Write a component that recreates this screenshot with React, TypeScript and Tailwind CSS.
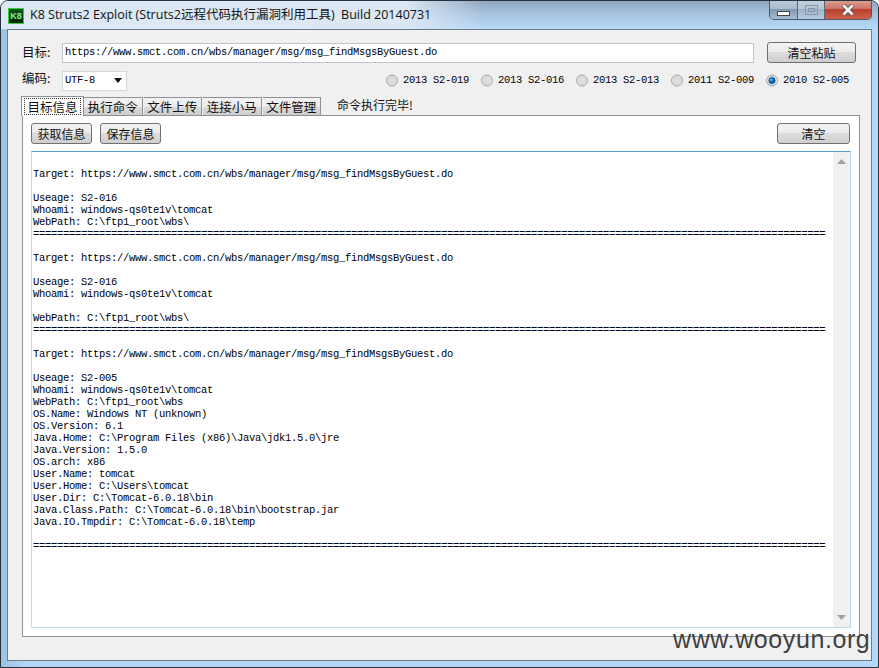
import React from 'react'

const CJK = "font-['Noto_Sans_CJK_SC',sans-serif]"
const MONO = "font-['Liberation_Mono','Noto_Sans_CJK_SC',monospace]"

const rule = '='.repeat(132)
const url = 'https://www.smct.com.cn/wbs/manager/msg/msg_findMsgsByGuest.do'

const output = [
  '',
  `Target: ${url}`,
  '',
  'Useage: S2-016',
  'Whoami: windows-qs0te1v\\tomcat',
  'WebPath: C:\\ftp1_root\\wbs\\',
  rule,
  '',
  `Target: ${url}`,
  '',
  'Useage: S2-016',
  'Whoami: windows-qs0te1v\\tomcat',
  '',
  'WebPath: C:\\ftp1_root\\wbs\\',
  rule,
  '',
  `Target: ${url}`,
  '',
  'Useage: S2-005',
  'Whoami: windows-qs0te1v\\tomcat',
  'WebPath: C:\\ftp1_root\\wbs',
  'OS.Name: Windows NT (unknown)',
  'OS.Version: 6.1',
  'Java.Home: C:\\Program Files (x86)\\Java\\jdk1.5.0\\jre',
  'Java.Version: 1.5.0',
  'OS.arch: x86',
  'User.Name: tomcat',
  'User.Home: C:\\Users\\tomcat',
  'User.Dir: C:\\Tomcat-6.0.18\\bin',
  'Java.Class.Path: C:\\Tomcat-6.0.18\\bin\\bootstrap.jar',
  'Java.IO.Tmpdir: C:\\Tomcat-6.0.18\\temp',
  '',
  rule,
]

const exploits = [
  { label: '2013 S2-019', checked: false },
  { label: '2013 S2-016', checked: false },
  { label: '2013 S2-013', checked: false },
  { label: '2011 S2-009', checked: false },
  { label: '2010 S2-005', checked: true },
]

const tabs = ['执行命令', '文件上传', '连接小马', '文件管理']

function Btn({ label, className }: { label: string; className: string }) {
  return (
    <button
      className={`h-[21px] rounded-[3px] border border-[#707070] bg-[linear-gradient(#f2f2f2_0%,#ebebeb_50%,#dddddd_50%,#cfcfcf_100%)] text-[12px] leading-none text-[#111] ${CJK} ${className}`}
    >
      {label}
    </button>
  )
}

function Radio({ checked }: { checked: boolean }) {
  return (
    <svg width="13" height="13" viewBox="0 0 13 13">
      <circle cx="6.5" cy="6.5" r="6" fill="#ececec" stroke="#9a9b9b" />
      <circle cx="6.5" cy="6.5" r="4.3" fill={checked ? '#0f5f9e' : '#dedede'} stroke={checked ? '#d0dbe6' : '#cfcfcf'} />
      {checked && <circle cx="5.8" cy="5.6" r="1.4" fill="#6fc0ee" />}
    </svg>
  )
}

export default function App() {
  return (
    <div className="relative flex h-[668px] w-[879px] flex-col overflow-hidden rounded-t-lg border border-[#26323d] bg-[linear-gradient(90deg,#9cc2e4_0%,#b5d8f8_3%,#b5d8f8_100%)] px-[6px] pb-[6px]">
      {/* title bar */}
      <div className="-mx-[6px] flex h-[28px] shrink-0 items-start bg-[linear-gradient(90deg,#dce8f3_0%,#dbe7f3_46%,#dbe7f300_55%),linear-gradient(#8fa6bd_0%,#a6c2de_45%,#b6dafa_100%)] pl-[7px] pr-[6px]">
        <div className="mt-[7px] flex h-[16px] w-[16px] items-center justify-center border border-[#2fd02f] bg-[linear-gradient(#0c5a1c,#032208)] font-['Liberation_Sans',sans-serif] text-[9px] font-bold leading-none text-[#8af08a]">
          K8
        </div>
        <span className="ml-[6px] mt-[5px] whitespace-nowrap font-['Open_Sans','Noto_Sans_CJK_SC',sans-serif] text-[12.5px] leading-[18px] text-[#111]">
          K8 Struts2 Exploit (Struts2远程代码执行漏洞利用工具)&nbsp; Build 20140731
        </span>
        <div className="-mt-px ml-auto flex h-[20px] w-[103px] overflow-hidden rounded-b-[5px] border border-t-0 border-[#4a5a6a]">
          <div className="flex w-[28px] items-end justify-center border-r border-[#55677a] bg-[linear-gradient(#bccbd9_0%,#a9bccd_50%,#8299af_50%,#a4bcd2_100%)] pb-[3px]">
            <div className="h-[5px] w-[13px] border border-[#444] bg-white" />
          </div>
          <div className="flex w-[27px] items-center justify-center border-r border-[#55677a] bg-[linear-gradient(#c4d2df_0%,#b4c5d5_50%,#9fb4c8_50%,#b4cbdf_100%)]">
            <div className="flex h-[10px] w-[13px] items-center justify-center border border-[#8496a8]">
              <div className="h-[4px] w-[7px] border border-[#8496a8]" />
            </div>
          </div>
          <div className="flex flex-1 items-center justify-center bg-[linear-gradient(#dca498_0%,#cc6f60_50%,#b8402e_50%,#d0604c_100%)]">
            <svg width="16" height="12" viewBox="0 0 16 12">
              <path d="M3.5 1.5L12.5 10.5M12.5 1.5L3.5 10.5" fill="none" stroke="#444" strokeWidth="4.4" />
              <path d="M3.5 1.5L12.5 10.5M12.5 1.5L3.5 10.5" fill="none" stroke="#fff" strokeWidth="2.8" />
            </svg>
          </div>
        </div>
      </div>

      {/* window client */}
      <div className="flex min-h-0 flex-1 flex-col border border-[#6d7b88] bg-[#f0f0f0] px-[14px] pt-[12px]">
        <div className="flex h-[21px] items-center">
          <span className={`w-[40px] text-[12.5px] text-[#111] ${CJK}`}>目标:</span>
          <div className={`flex h-[20px] w-[692px] items-center border border-[#c2c6ca] bg-white pl-[2px] text-[10.5px] tracking-[-0.3px] text-black ${MONO}`}>
            {url}
          </div>
          <Btn label="清空粘贴" className="ml-[13px] w-[89px]" />
        </div>

        <div className="mt-[7px] flex h-[21px] items-center">
          <span className={`w-[40px] self-start text-[12.5px] leading-[15px] text-[#111] ${CJK}`}>编码:</span>
          <div className={`flex h-[20px] w-[65px] items-center justify-between border border-[#d5d8db] bg-white pl-[2px] pr-[4px] text-[10.5px] tracking-[-0.3px] text-black ${MONO}`}>
            UTF-8
            <svg width="8" height="5" viewBox="0 0 8 5">
              <path d="M0 0h8L4 5z" fill="#111" />
            </svg>
          </div>
          <div className="ml-[259px] flex gap-[12px]">
            {exploits.map((e) => (
              <div key={e.label} className="flex w-[83px] items-center gap-[5px]">
                <Radio checked={e.checked} />
                <span className={`whitespace-nowrap text-[10.5px] tracking-[-0.3px] text-black ${MONO}`}>{e.label}</span>
              </div>
            ))}
          </div>
        </div>

        {/* tabs */}
        <div className="relative z-10 mt-[4px] flex h-[20px] items-end">
          <div className={`-ml-px -mb-px flex h-[20px] w-[63px] items-center justify-center border border-b-0 border-[#8e9296] bg-white text-[12.5px] text-[#111] ${CJK}`}>
            <span className="border border-dotted border-[#333] px-[2px] leading-[15px]">目标信息</span>
          </div>
          <div className="flex gap-px">
            {tabs.map((t) => (
              <div
                key={t}
                className={`flex h-[18px] w-[58.5px] items-center justify-center border border-b-0 border-l-0 border-[#8e9296] bg-[linear-gradient(#f2f2f2_0%,#ebebeb_50%,#dcdcdc_50%,#cdcdcd_100%)] pt-[1px] text-[12.5px] text-[#111] ${CJK}`}
              >
                {t}
              </div>
            ))}
          </div>
          <span className={`ml-[16px] self-center text-[12px] text-[#111] ${CJK}`}>命令执行完毕!</span>
        </div>

        {/* tab panel */}
        <div className="mb-[23px] flex min-h-0 w-[838px] flex-1 flex-col border border-[#8e9296] bg-white pl-[8px] pr-[8px] pt-[7px]">
          <div className="flex pr-[1px]">
            <Btn label="获取信息" className="w-[61px]" />
            <Btn label="保存信息" className="ml-[8px] w-[61px]" />
            <Btn label="清空" className="ml-auto w-[73px]" />
          </div>

          <div className="mb-[8px] mt-[7px] flex min-h-0 flex-1 border border-[#bcdcf2] border-t-[#5a9bc8]">
            <pre className={`min-w-0 flex-1 overflow-hidden pl-[1px] pt-[4px] text-[10.5px] leading-[12px] tracking-[-0.3px] text-black ${MONO}`}>
              {output.join('\n')}
            </pre>
            <div className="flex w-[17px] flex-col items-center justify-between bg-[#f0f0f0] py-[7px]">
              <svg width="9" height="5" viewBox="0 0 9 5">
                <path d="M4.5 0L9 5H0z" fill="#a3a3a3" />
              </svg>
              <svg width="9" height="5" viewBox="0 0 9 5">
                <path d="M0 0h9L4.5 5z" fill="#a3a3a3" />
              </svg>
            </div>
          </div>
        </div>
      </div>

      {/* watermark */}
      <span className="absolute left-[672px] top-[623px] font-['Liberation_Sans',sans-serif] text-[25px] leading-[30px] tracking-[0.6px] text-[#3f3f3f]">
        www.wooyun.org
      </span>
    </div>
  )
}
